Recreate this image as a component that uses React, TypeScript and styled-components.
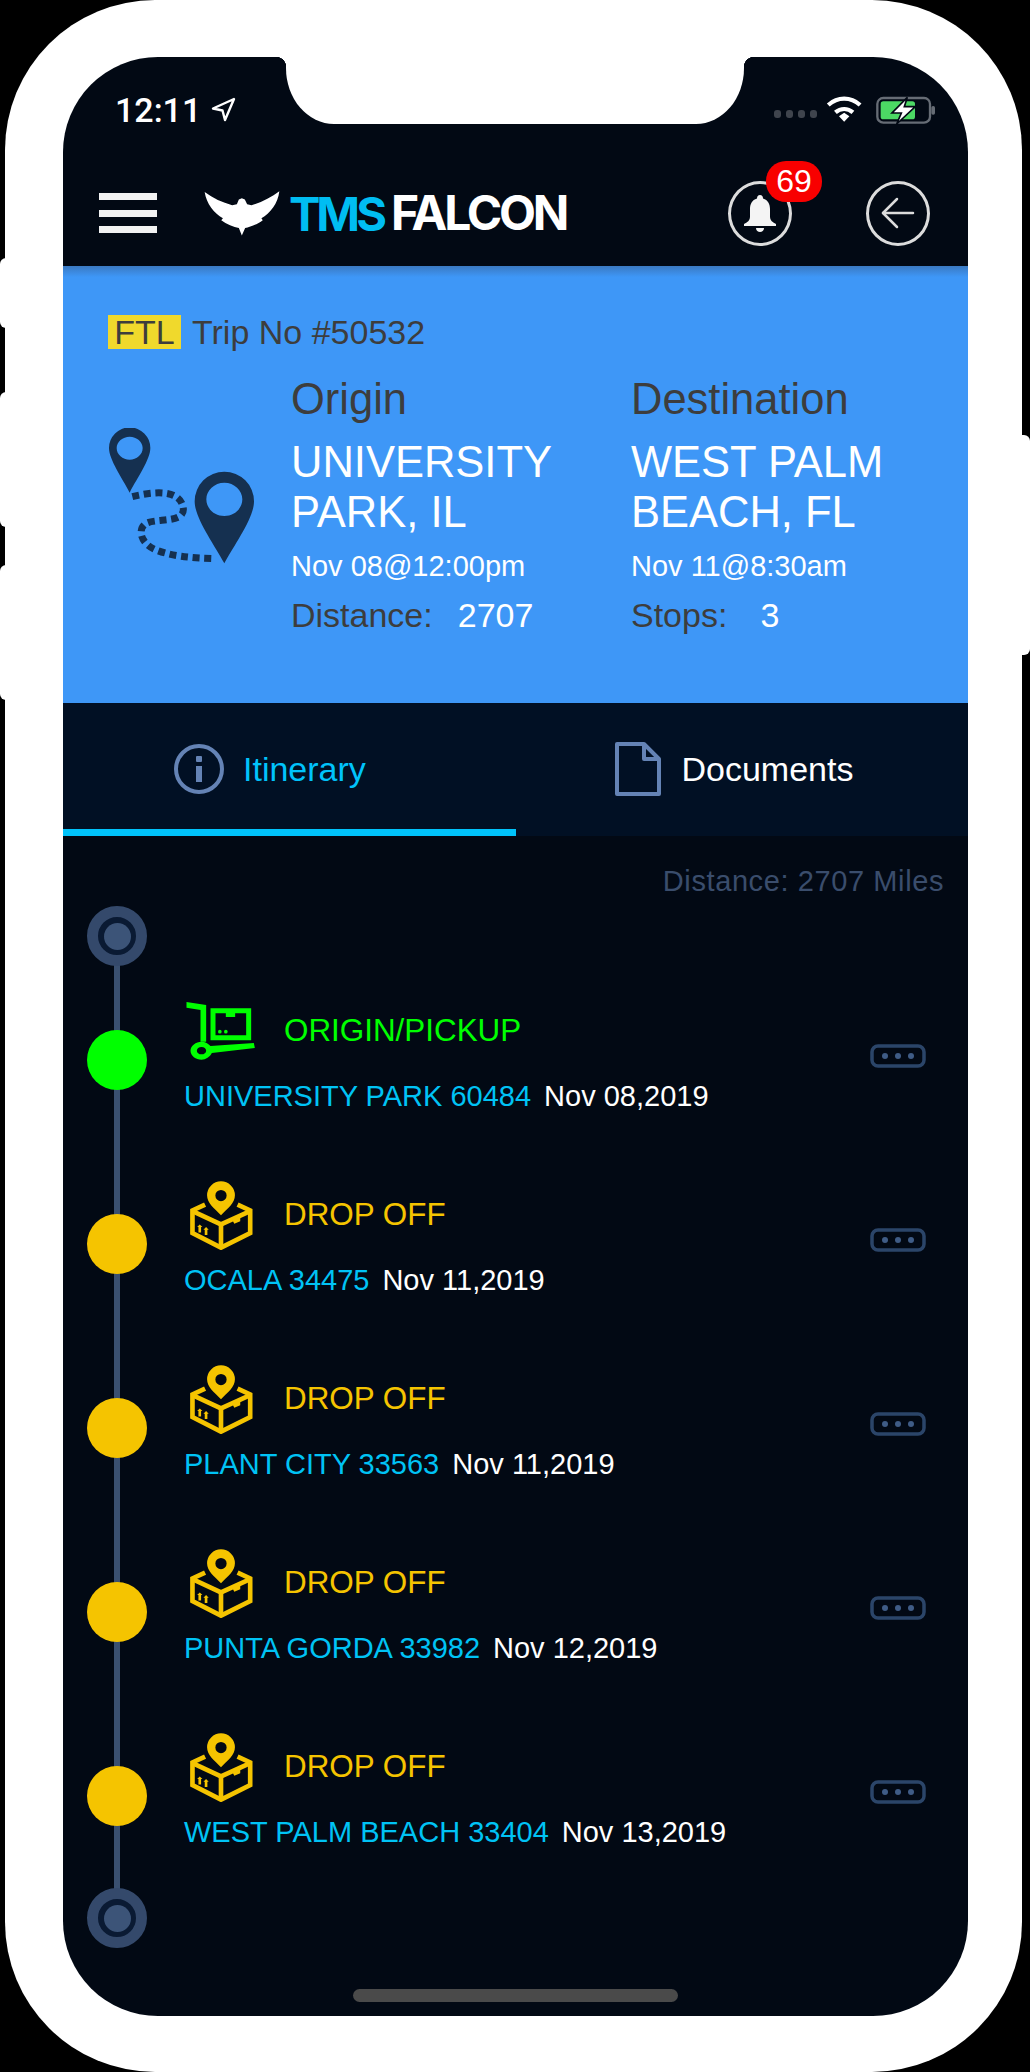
import * as React from 'react'
import styled, { createGlobalStyle } from 'styled-components'

const GlobalStyle = createGlobalStyle`
  html, body {
    margin: 0;
    padding: 0;
    background: #000;
  }
  * {
    box-sizing: border-box;
  }
`

const Page = styled.div`
  position: relative;
  width: 1030px;
  height: 2072px;
  background: #000;
  font-family: 'Liberation Sans', Arial, sans-serif;
  overflow: hidden;
`

const SideButton = styled.div<{ $top: number; $height: number; $right?: boolean }>`
  position: absolute;
  top: ${(p) => p.$top}px;
  height: ${(p) => p.$height}px;
  width: 20px;
  background: #fff;
  border-radius: 6px;
  ${(p) => (p.$right ? 'right: 0;' : 'left: 0;')}
`

const Phone = styled.div`
  position: relative;
  height: 2072px;
  margin: 0 8px 0 5px;
  padding: 57px 54px 56px 58px;
  background: #fff;
  border-radius: 150px;
`

const Screen = styled.div`
  position: relative;
  display: flex;
  flex-direction: column;
  height: 100%;
  background: #020914;
  border-radius: 95px;
  overflow: hidden;
`

const Notch = styled.div`
  position: absolute;
  top: 0;
  left: 223px;
  width: 458px;
  height: 67px;
  background: #fff;
  border-radius: 0 0 48px 48px / 0 0 56px 56px;

  &::before,
  &::after {
    content: '';
    position: absolute;
    top: 0;
    width: 10px;
    height: 10px;
  }
  &::before {
    left: -10px;
    background: radial-gradient(circle at 0 100%, transparent 10px, #fff 10.5px);
  }
  &::after {
    right: -10px;
    background: radial-gradient(circle at 100% 100%, transparent 10px, #fff 10.5px);
  }
`

const StatusBar = styled.div`
  display: flex;
  align-items: center;
  height: 73px;
  padding: 32px 32px 0 52px;
`

const Clock = styled.span`
  font-family: Roboto, sans-serif;
  font-weight: 500;
  font-size: 34px;
  color: #fff;
  margin-right: 10px;
`

const StatusRight = styled.div`
  display: flex;
  align-items: center;
  margin-left: auto;
`

const SignalDots = styled.div`
  display: flex;
  gap: 5px;
  margin: 8px 9px 0 0;
`

const SignalDot = styled.i`
  width: 7px;
  height: 8px;
  border-radius: 3px;
  background: #3f444d;
`

const Header = styled.header`
  display: flex;
  align-items: center;
  height: 136px;
  padding: 30px 38px 0 36px;
`

const Burger = styled.div`
  display: flex;
  flex-direction: column;
  justify-content: space-between;
  width: 58px;
  height: 40px;
  margin-right: 46px;
`

const BurgerBar = styled.i`
  height: 7px;
  background: #f2f2f2;
`

const Logo = styled.div`
  display: flex;
  align-items: center;
  font-family: Inter, sans-serif;
  font-weight: 700;
  font-size: 48px;
  letter-spacing: -3.2px;
  line-height: 1;
`

const LogoBlue = styled.span`
  color: #00bdf2;
  font-size: 47px;
  letter-spacing: -4px;
  margin: 0 8px 0 8px;
`

const LogoWhite = styled.span`
  color: #fff;
`

const HeaderActions = styled.div`
  display: flex;
  gap: 74px;
  margin-left: auto;
`

const RoundButton = styled.div`
  position: relative;
  display: flex;
  align-items: center;
  justify-content: center;
  width: 64px;
  height: 65px;
  border: 3px solid #dcdcdc;
  border-radius: 50%;
`

const Badge = styled.span`
  position: absolute;
  top: -23px;
  left: 35px;
  width: 56px;
  height: 41px;
  border-radius: 20px;
  background: #f80000;
  color: #fff;
  font-size: 32px;
  line-height: 41px;
  text-align: center;
`

const TripPanel = styled.section`
  height: 437px;
  padding: 49px 0 0 45px;
  background: linear-gradient(#3a79c2 0, #3e97f7 11px);
  color: #3d3d3d;
`

const TripRow = styled.div`
  display: flex;
  align-items: center;
  gap: 11px;
  height: 34px;
  font-size: 34px;
`

const FtlTag = styled.span`
  width: 73px;
  height: 34px;
  background: #f0d92c;
  line-height: 34px;
  text-align: center;
`

const RouteGrid = styled.div`
  display: grid;
  grid-template-columns: 183px 340px 1fr;
  margin-top: 27px;
`

const RouteIcon = styled.svg`
  display: block;
  margin-top: 52px;
  margin-left: -1px;
`

const Place = styled.div`
  display: flex;
  flex-direction: column;
`

const PlaceHeading = styled.div`
  font-size: 43.5px;
  line-height: 46px;
  margin-bottom: 15px;
`

const PlaceName = styled.div`
  font-size: 43.5px;
  line-height: 50px;
  color: #fff;
  margin-bottom: 12px;
`

const PlaceTime = styled.div`
  font-size: 29px;
  line-height: 34px;
  color: #fff;
  margin-bottom: 13px;
`

const PlaceStat = styled.div`
  font-size: 34px;
  line-height: 38px;
`

const PlaceStatValue = styled.span<{ $gap: number }>`
  color: #fff;
  margin-left: ${(p) => p.$gap}px;
`

const Tabs = styled.nav`
  display: flex;
  height: 133px;
  background: #011024;
`

const Tab = styled.div<{ $indent: number; $gap: number; $active?: boolean }>`
  flex: none;
  width: 50%;
  display: flex;
  align-items: center;
  gap: ${(p) => p.$gap}px;
  padding: 6px 0 ${(p) => (p.$active ? 0 : 7)}px ${(p) => p.$indent}px;
  border-bottom: ${(p) => (p.$active ? '7px solid #00c3fb' : 'none')};
  font-size: 34px;
  color: ${(p) => (p.$active ? '#00c3fb' : '#fff')};
`

const Itinerary = styled.main`
  flex: 1;
  display: flex;
  flex-direction: column;
  padding-top: 29px;
`

const TotalDistance = styled.div`
  padding-right: 24px;
  font-size: 29px;
  line-height: 32px;
  letter-spacing: 0.6px;
  text-align: right;
  color: #3a4d6c;
`

const Timeline = styled.div`
  position: relative;
  display: flex;
  flex-direction: column;
  margin-top: 9px;
  padding-left: 24px;
`

const Rail = styled.div`
  position: absolute;
  left: 51px;
  top: 30px;
  bottom: 30px;
  width: 6px;
  background: #3a5070;
`

const EndDot = styled.div`
  position: relative;
  display: flex;
  align-items: center;
  justify-content: center;
  width: 60px;
  height: 60px;
  border: 11px solid #34496b;
  border-radius: 50%;
  background: #0a1a33;

  &::after {
    content: '';
    width: 27px;
    height: 27px;
    border-radius: 50%;
    background: #3c5478;
  }
`

const StopRow = styled.div<{ $first?: boolean }>`
  position: relative;
  display: grid;
  grid-template-columns: 60px 1fr auto;
  column-gap: 37px;
  align-items: center;
  height: 184px;
  margin-top: ${(p) => (p.$first ? 2 : 0)}px;
  padding-right: 42px;
`

const StopDot = styled.div<{ $color: string }>`
  width: 60px;
  height: 60px;
  border-radius: 50%;
  background: ${(p) => p.$color};
`

const StopBody = styled.div`
  align-self: start;
  padding-top: 29px;
`

const StopKind = styled.div<{ $color: string }>`
  display: flex;
  align-items: center;
  height: 68px;
  font-size: 31.4px;
  color: ${(p) => p.$color};
`

const KindIconSlot = styled.div`
  display: flex;
  justify-content: center;
  width: 72px;
  margin-right: 28px;
`

const StopLine = styled.div`
  margin-top: 15px;
  font-size: 29px;
  line-height: 33px;
  white-space: nowrap;
`

const StopCity = styled.span`
  color: #00c3f5;
  margin-right: 13px;
`

const StopDate = styled.span`
  color: #fff;
`

const MoreButton = styled.svg`
  display: block;
  margin-bottom: 8px;
`

const HomeIndicator = styled.div`
  align-self: center;
  width: 325px;
  height: 13px;
  margin-top: auto;
  margin-bottom: 14px;
  border-radius: 7px;
  background: #4a4a4a;
`

const NavArrow = () => (
  <svg width="25" height="25" viewBox="0 0 25 25" fill="none" stroke="#fff" strokeWidth="2.4" strokeLinejoin="round">
    <path d="M23 2 L2 11.5 L11.5 13.5 L14 23 Z" />
  </svg>
)

const Wifi = () => (
  <svg width="37" height="27" viewBox="200 47 114 80" fill="none" stroke="#fff" strokeWidth="13">
    <path d="M207 73 C236 47 276 47 305 73" />
    <path d="M229 96 C245 82 267 82 283 96" />
    <path d="M240 108 L256 97 L272 108 L256 125 Z" fill="#fff" stroke="none" />
  </svg>
)

const Battery = () => (
  <svg width="60" height="30" viewBox="348 42 180 88" fill="none" style={{ marginLeft: 13 }}>
    <rect x="352" y="50" width="158" height="74" rx="18" stroke="#666c75" strokeWidth="7" />
    <rect x="362" y="60" width="103" height="54" rx="8" fill="#4cd964" />
    <rect x="514" y="74" width="11" height="26" rx="5" fill="#666c75" />
    <path d="M442 48 L396 95 L424 95 L410 128 L466 76 L433 76 Z" fill="#fff" stroke="#020914" strokeWidth="5" />
  </svg>
)

const Falcon = () => (
  <svg width="78" height="47" viewBox="70 0 235 140">
    <path
      fill="#fff"
      d="M75 5 C100 24 128 36 158 45 L172 42 L178 28 L187 24 L196 28 L203 42 L216 45 C246 36 276 22 300 3 C296 40 272 70 246 84 L250 90 C235 102 212 110 197 114 L187 136 L178 114 C163 110 140 102 125 90 L130 84 C104 70 80 40 75 5 Z"
    />
  </svg>
)

const BellIcon = () => (
  <svg width="34" height="38" viewBox="0 0 34 38" fill="#f4f4f4">
    <path d="M17 1 C19 1 20 2.500 20 4.500 C25 6 27 10 27 15 L27 23 C27 26 29 28 33 30 L33 32 L1 32 L1 30 C5 28 7 26 7 23 L7 15 C7 10 9 6 14 4.500 C14 2.500 15 1 17 1 Z" />
    <path d="M13 34 L21 34 C21 36.500 19 38 17 38 C15 38 13 36.500 13 34 Z" />
  </svg>
)

const BackIcon = () => (
  <svg width="34" height="32" viewBox="0 0 34 32" fill="none" stroke="#dcdcdc" strokeWidth="2.500" strokeLinecap="round" strokeLinejoin="round">
    <path d="M16 2 L2 16 L16 30" />
    <path d="M2 16 L32 16" />
  </svg>
)

const RouteMap = () => (
  <RouteIcon width="150" height="137" viewBox="50 40 450 411">
    <path
      fill="#153050"
      fillRule="evenodd"
      d="M56 100 A62 62 0 0 1 180 100 C180 135 140 190 118 234 C96 190 56 135 56 100 Z M118 66 C97 66 79 81 79 100 C79 120 97 135 118 135 C139 135 157 120 157 100 C157 81 139 66 118 66 Z"
    />
    <path
      fill="#153050"
      fillRule="evenodd"
      d="M313 260 A89 89 0 0 1 491 260 C491 310 435 385 402 446 C369 385 313 310 313 260 Z M402 204 C372 204 348 227 348 254 C348 282 372 304 402 304 C432 304 456 282 456 254 C456 227 432 204 402 204 Z"
    />
    <path
      fill="none"
      stroke="#153050"
      strokeWidth="21"
      strokeDasharray="21 14"
      d="M126 246 C190 230 272 222 279 282 C282 326 200 310 168 326 C140 342 150 386 195 405 C240 424 300 430 372 432"
    />
  </RouteIcon>
)

const InfoIcon = () => (
  <svg width="50" height="50" viewBox="0 0 50 50">
    <circle cx="25" cy="25" r="23" fill="none" stroke="#6483b5" strokeWidth="4" />
    <rect x="22" y="12" width="6" height="6" rx="1" fill="#6483b5" />
    <rect x="22" y="22" width="6" height="16" fill="#6483b5" />
  </svg>
)

const DocIcon = () => (
  <svg width="46" height="54" viewBox="0 0 46 54" fill="none" stroke="#6483b5" strokeWidth="4" strokeLinejoin="round">
    <path d="M2 2 L29 2 L44 17 L44 52 L2 52 Z" />
    <path d="M29 2 L29 17 L44 17" />
  </svg>
)

const CartIcon = () => (
  <svg width="72" height="60" viewBox="45 30 215 180" fill="#00ff00" fillRule="evenodd">
    <path d="M52 33 L111 42 L111 152 L94 152 L94 57 L52 50 Z" />
    <path d="M124 52 L246 52 L246 148 L124 148 Z M139 67 L139 133 L231 133 L231 67 L198 67 L198 78 L170 78 L170 67 Z" />
    <circle cx="152" cy="122" r="5.500" />
    <circle cx="170" cy="122" r="5.500" />
    <path d="M97 152 C108 152 118 158 124 165 L254 156 L257 171 L128 186 C122 198 110 206 97 206 C80 206 64 194 64 179 C64 164 80 152 97 152 Z M97 168 C89 168 83 173 83 179 C83 185 89 190 97 190 C105 190 111 185 111 179 C111 173 105 168 97 168 Z" />
  </svg>
)

const BoxIcon = () => (
  <svg width="66" height="69" viewBox="36 25 198 208">
    <path
      fill="#f5c400"
      fillRule="evenodd"
      d="M96 68 A42 42 0 0 1 180 68 C180 92 158 108 138 128 C118 108 96 92 96 68 Z M138 52 A17 17 0 1 0 138 86 A17 17 0 1 0 138 52 Z"
    />
    <g fill="none" stroke="#f5c400" strokeWidth="14">
      <path d="M90 96 L52 114 L52 182 L138 226 L226 182 L226 114 L188 96" />
      <path d="M52 116 L138 156 L226 116" />
      <path d="M138 156 L138 226" />
    </g>
    <path fill="#f5c400" d="M172 142 L196 132 L196 146 L178 154 Z M66 164 L74 156 L82 164 L78 164 L78 180 L70 180 L70 164 Z M85 172 L93 164 L101 172 L97 172 L97 188 L89 188 L89 172 Z" />
  </svg>
)

const MoreIcon = () => (
  <MoreButton width="56" height="24" viewBox="0 0 56 24">
    <rect x="2" y="2" width="52" height="20" rx="6" fill="none" stroke="#2b4569" strokeWidth="3.500" />
    <circle cx="15" cy="12" r="3" fill="#3f5c86" />
    <circle cx="28" cy="12" r="3" fill="#3f5c86" />
    <circle cx="41" cy="12" r="3" fill="#3f5c86" />
  </MoreButton>
)

const stops = [
  { kind: 'ORIGIN/PICKUP', city: 'UNIVERSITY PARK 60484', date: 'Nov 08,2019', color: '#00ff00', icon: <CartIcon /> },
  { kind: 'DROP OFF', city: 'OCALA 34475', date: 'Nov 11,2019', color: '#f5c400', icon: <BoxIcon /> },
  { kind: 'DROP OFF', city: 'PLANT CITY 33563', date: 'Nov 11,2019', color: '#f5c400', icon: <BoxIcon /> },
  { kind: 'DROP OFF', city: 'PUNTA GORDA 33982', date: 'Nov 12,2019', color: '#f5c400', icon: <BoxIcon /> },
  { kind: 'DROP OFF', city: 'WEST PALM BEACH 33404', date: 'Nov 13,2019', color: '#f5c400', icon: <BoxIcon /> },
]

export default function App() {
  return (
    <Page>
      <GlobalStyle />
      <SideButton $top={258} $height={70} />
      <SideButton $top={392} $height={135} />
      <SideButton $top={565} $height={135} />
      <SideButton $top={435} $height={220} $right />
      <Phone>
        <Screen>
          <Notch />
          <StatusBar>
            <Clock>12:11</Clock>
            <NavArrow />
            <StatusRight>
              <SignalDots>
                <SignalDot />
                <SignalDot />
                <SignalDot />
                <SignalDot />
              </SignalDots>
              <Wifi />
              <Battery />
            </StatusRight>
          </StatusBar>

          <Header>
            <Burger>
              <BurgerBar />
              <BurgerBar />
              <BurgerBar />
            </Burger>
            <Logo>
              <Falcon />
              <LogoBlue>TMS</LogoBlue>
              <LogoWhite>FALCON</LogoWhite>
            </Logo>
            <HeaderActions>
              <RoundButton>
                <BellIcon />
                <Badge>69</Badge>
              </RoundButton>
              <RoundButton>
                <BackIcon />
              </RoundButton>
            </HeaderActions>
          </Header>

          <TripPanel>
            <TripRow>
              <FtlTag>FTL</FtlTag>
              Trip No #50532
            </TripRow>
            <RouteGrid>
              <RouteMap />
              <Place>
                <PlaceHeading>Origin</PlaceHeading>
                <PlaceName>
                  UNIVERSITY
                  <br />
                  PARK, IL
                </PlaceName>
                <PlaceTime>Nov 08@12:00pm</PlaceTime>
                <PlaceStat>
                  Distance:
                  <PlaceStatValue $gap={25}>2707</PlaceStatValue>
                </PlaceStat>
              </Place>
              <Place>
                <PlaceHeading>Destination</PlaceHeading>
                <PlaceName>
                  WEST PALM
                  <br />
                  BEACH, FL
                </PlaceName>
                <PlaceTime>Nov 11@8:30am</PlaceTime>
                <PlaceStat>
                  Stops:
                  <PlaceStatValue $gap={33}>3</PlaceStatValue>
                </PlaceStat>
              </Place>
            </RouteGrid>
          </TripPanel>

          <Tabs>
            <Tab $indent={111} $gap={19} $active>
              <InfoIcon />
              Itinerary
            </Tab>
            <Tab $indent={99} $gap={21}>
              <DocIcon />
              Documents
            </Tab>
          </Tabs>

          <Itinerary>
            <TotalDistance>Distance: 2707 Miles</TotalDistance>
            <Timeline>
              <Rail />
              <EndDot />
              {stops.map((stop, i) => (
                <StopRow key={stop.city} $first={i === 0}>
                  <StopDot $color={stop.color} />
                  <StopBody>
                    <StopKind $color={stop.color}>
                      <KindIconSlot>{stop.icon}</KindIconSlot>
                      {stop.kind}
                    </StopKind>
                    <StopLine>
                      <StopCity>{stop.city}</StopCity>
                      <StopDate>{stop.date}</StopDate>
                    </StopLine>
                  </StopBody>
                  <MoreIcon />
                </StopRow>
              ))}
              <EndDot />
            </Timeline>
            <HomeIndicator />
          </Itinerary>
        </Screen>
      </Phone>
    </Page>
  )
}
